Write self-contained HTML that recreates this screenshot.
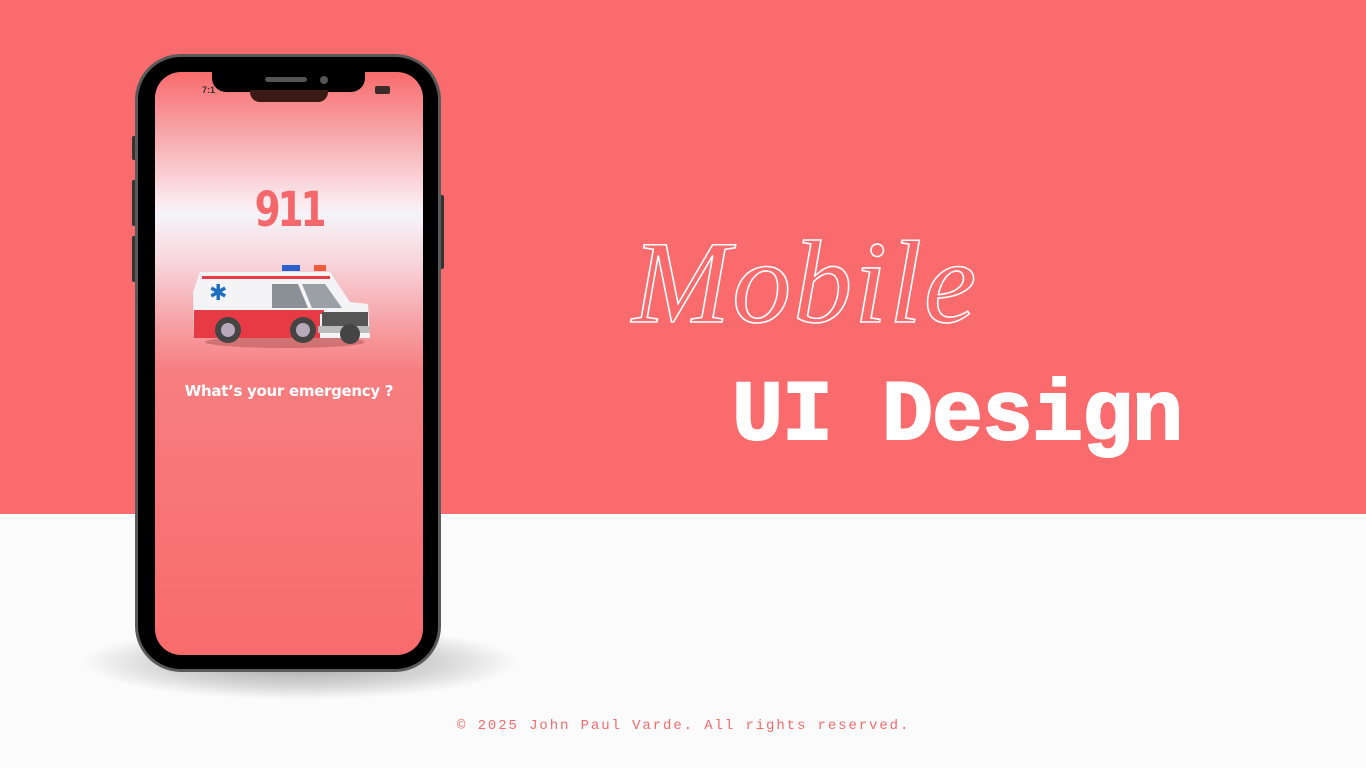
<!DOCTYPE html>
<html><head><meta charset="utf-8"><style>
*{margin:0;padding:0;box-sizing:border-box}
body{width:1366px;height:768px;position:relative;overflow:hidden;background:#fbfbfb;font-family:"Liberation Sans",sans-serif}
.top{position:absolute;left:0;top:0;width:1366px;height:514px;background:#f96b6d}
.shadow{position:absolute;left:80px;top:625px;width:440px;height:75px;border-radius:50%;background:radial-gradient(ellipse at center,rgba(0,0,0,.35) 0%,rgba(0,0,0,.15) 45%,rgba(0,0,0,0) 70%)}
.phone{position:absolute;left:135px;top:54px;width:306px;height:618px;border-radius:46px;background:#000;border:3px solid #5a5a5a}
.btn{position:absolute;background:#333;width:4px;border-radius:2px}
.screen{position:absolute;left:155px;top:72px;width:268px;height:583px;border-radius:26px;overflow:hidden;
background:linear-gradient(to bottom,#f96b6d 0px,#f7a0a3 55px,#fbe9ee 130px,#f5f3f8 143px,#f7d6dc 190px,#f6a2a6 250px,#f77e80 300px,#f96b6d 583px)}
.notch{position:absolute;left:212px;top:70px;width:153px;height:22px;background:#000;border-radius:0 0 14px 14px}
.notch2{position:absolute;left:250px;top:90px;width:78px;height:12px;background:#3a1a14;border-radius:0 0 10px 10px}
.spk{position:absolute;left:265px;top:77px;width:42px;height:5px;background:#555;border-radius:3px}
.cam{position:absolute;left:320px;top:76px;width:8px;height:8px;background:#555;border-radius:50%}
.n911{position:absolute;left:155px;width:268px;top:182px;text-align:center;font:bold 48px "DejaVu Sans",sans-serif;color:#f4676a;letter-spacing:-4px;transform:scaleX(.78)}
.q{position:absolute;left:155px;width:268px;top:382px;text-align:center;font:bold 15px "DejaVu Sans",sans-serif;color:#fff;letter-spacing:-.3px}
.script{position:absolute;left:632px;top:215px;font:italic 300 118px "Liberation Serif",serif;color:#f96b6d;-webkit-text-stroke:1.6px #fff;letter-spacing:2px}
.ui{position:absolute;left:732px;top:368px;font:bold 85px "Liberation Mono",monospace;color:#fff;letter-spacing:-1px;-webkit-text-stroke:2px #fff}
.foot{position:absolute;left:457px;top:718px;font:14px "Liberation Mono",monospace;color:#f26b6b;letter-spacing:1.9px}
</style></head><body>
<div class="top"></div>
<div class="shadow"></div>
<div class="btn" style="left:132px;top:136px;height:24px"></div>
<div class="btn" style="left:132px;top:180px;height:46px"></div>
<div class="btn" style="left:132px;top:236px;height:46px"></div>
<div class="btn" style="left:440px;top:195px;height:74px"></div>
<div class="phone"></div>
<div class="screen"></div>
<div class="notch"></div><div class="notch2"></div><div class="spk"></div><div class="cam"></div>
<div style="position:absolute;left:202px;top:85px;font:bold 9px 'Liberation Sans',sans-serif;color:#333">7:1</div>
<div style="position:absolute;left:375px;top:86px;width:15px;height:8px;background:#3a2a28;border-radius:2px"></div>
<div class="n911">911</div>
<svg style="position:absolute;left:190px;top:262px" width="186" height="90" viewBox="0 0 186 90">
<ellipse cx="95" cy="80" rx="80" ry="6" fill="rgba(120,40,40,.3)"/>
<rect x="92" y="3" width="18" height="6" fill="#2a5fd0"/><rect x="124" y="3" width="12" height="6" fill="#f05a3a"/>
<path d="M10 10 H110 L140 10 L160 40 L178 42 L180 76 H4 L3 30 Z" fill="#f4f3f6"/>
<rect x="12" y="14" width="128" height="3" fill="#e63b44"/>
<path d="M4 50 H130 L130 76 H4 Z" fill="#e63b44"/>
<rect x="4" y="48" width="130" height="4" fill="#e63b44"/>
<path d="M82 22 H108 L118 46 H82 Z" fill="#8b8f96"/><path d="M112 22 H135 L152 46 H122 Z" fill="#9aa0a6"/>
<rect x="132" y="50" width="46" height="14" fill="#555"/><rect x="128" y="64" width="52" height="7" fill="#bbb"/>
<text x="19" y="38" font-size="22" fill="#1f6fc0" font-family="DejaVu Sans">✱</text>
<circle cx="38" cy="68" r="13" fill="#444"/><circle cx="38" cy="68" r="7" fill="#b8a8bb"/>
<circle cx="113" cy="68" r="13" fill="#444"/><circle cx="113" cy="68" r="7" fill="#b8a8bb"/>
<circle cx="160" cy="72" r="10" fill="#444"/>
</svg>
<div class="q">What’s your emergency ?</div>
<div class="script">Mobile</div>
<div class="ui">UI Design</div>
<div class="foot">© 2025 John Paul Varde. All rights reserved.</div>
</body></html>
